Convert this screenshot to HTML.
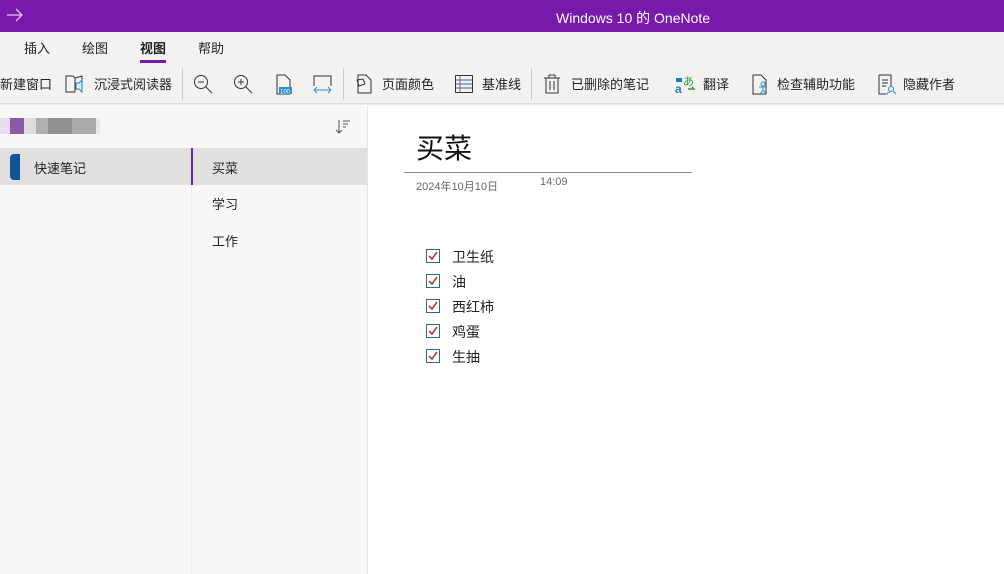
<!DOCTYPE html>
<html><head><meta charset="utf-8"><style>
*{margin:0;padding:0;box-sizing:border-box}
body{width:1004px;height:574px;overflow:hidden;background:#fff;font-family:"Liberation Sans","Noto Sans CJK SC",sans-serif;color:#222;position:relative}
.a{position:absolute;white-space:nowrap}
.t{font-size:13px}
svg{position:absolute}
</style></head><body>
<div class="a" style="left:0;top:0;width:1004px;height:32px;background:#7719aa"></div>
<svg style="left:6px;top:8px" width="18" height="14"><path d="M1 7H16M10 1L16 7L10 13" stroke="#e4c8f0" stroke-width="1.3" fill="none"/></svg>
<div class="a" style="left:556px;top:8px;color:#fff;font-size:14px">Windows 10 的 OneNote</div>
<div class="a" style="left:0;top:32px;width:1004px;height:72px;background:#f3f2f1"></div>
<div class="a t" style="left:24px;top:38px">插入</div>
<div class="a t" style="left:82px;top:38px">绘图</div>
<div class="a t" style="left:140px;top:38px;font-weight:bold">视图</div>
<div class="a" style="left:140px;top:60px;width:26px;height:3px;background:#7719aa"></div>
<div class="a t" style="left:198px;top:38px">帮助</div>
<div class="a t" style="left:0;top:74px">新建窗口</div>
<svg style="left:65px;top:74px" width="22" height="20"><path d="M1 2H8L10 4V18H1ZM10 4L17 2V8" stroke="#333" fill="none"/><path d="M11 9L14 9L17 6V18L14 15H11Z" stroke="#2a7fc1" fill="#dbeefa"/></svg>
<div class="a t" style="left:94px;top:74px">沉浸式阅读器</div>
<div class="a" style="left:182px;top:68px;width:1px;height:32px;background:#ccc"></div>
<svg style="left:193px;top:74px" width="22" height="20"><circle cx="8" cy="8" r="6.5" stroke="#333" fill="none"/><path d="M5 8H11M13 13L19 19" stroke="#333"/></svg>
<svg style="left:233px;top:74px" width="22" height="20"><circle cx="8" cy="8" r="6.5" stroke="#333" fill="none"/><path d="M5 8H11M8 5V11M13 13L19 19" stroke="#333"/></svg>
<svg style="left:275px;top:74px" width="20" height="22"><path d="M2 1H10L15 6V20H2Z" stroke="#333" fill="none"/><rect x="4" y="13" width="13" height="7" fill="#2a8fd4"/><text x="5" y="19.5" font-size="6" fill="#fff" font-family="Liberation Sans">100</text></svg>
<svg style="left:312px;top:74px" width="22" height="20"><path d="M2 12V2H19V12" stroke="#333" fill="none"/><path d="M2 16H19M2 16L5 13M2 16L5 19M19 16L16 13M19 16L16 19" stroke="#2a8fd4" fill="none"/></svg>
<div class="a" style="left:343px;top:68px;width:1px;height:32px;background:#ccc"></div>
<svg style="left:354px;top:74px" width="20" height="20"><path d="M4 1H12L17 6V19H4Z M3 6L9 5L11 10L5 12Z" stroke="#333" fill="none"/></svg>
<div class="a t" style="left:382px;top:74px">页面颜色</div>
<svg style="left:454px;top:74px" width="20" height="20"><rect x="1.5" y="1.5" width="17" height="17" stroke="#333" fill="none"/><path d="M2 6H18M2 10H18M2 14H18" stroke="#2a6fb0"/><path d="M6 2V18" stroke="#c0436b"/></svg>
<div class="a t" style="left:482px;top:74px">基准线</div>
<div class="a" style="left:531px;top:68px;width:1px;height:32px;background:#ccc"></div>
<svg style="left:543px;top:74px" width="18" height="20"><path d="M1 4H17M6 4V1H12V4M3 4V19H15V4M7 7V16M11 7V16" stroke="#333" fill="none"/></svg>
<div class="a t" style="left:571px;top:74px">已删除的笔记</div>
<svg style="left:675px;top:74px" width="22" height="20"><text x="0" y="19" font-size="12" fill="#1f7bbf" font-weight="bold" font-family="Liberation Sans">a</text><text x="8" y="11" font-size="11" fill="#2a9d3a" font-family="Noto Sans CJK SC">あ</text><rect x="1" y="4" width="6" height="4" fill="#1f7bbf"/><path d="M13 15H19L17 13" stroke="#2a9d3a" fill="none" stroke-width="1.5"/></svg>
<div class="a t" style="left:703px;top:74px">翻译</div>
<svg style="left:751px;top:74px" width="22" height="22"><path d="M2 1H10L15 6V20H2Z" stroke="#333" fill="none"/><circle cx="12" cy="10" r="2" stroke="#2a8fd4" fill="none"/><path d="M8 13H16M12 12V16L9 20M12 16L15 20" stroke="#2a8fd4" fill="none"/></svg>
<div class="a t" style="left:777px;top:74px">检查辅助功能</div>
<svg style="left:877px;top:74px" width="22" height="22"><path d="M2 1H14V12M2 1V20H9" stroke="#333" fill="none"/><path d="M5 6H11M5 9H11M5 12H9" stroke="#333"/><circle cx="14" cy="15" r="2.5" stroke="#2a8fd4" fill="none"/><path d="M16 17L19 20M10 21C10 18 12 18 13 18" stroke="#2a8fd4" fill="none"/></svg>
<div class="a t" style="left:903px;top:74px">隐藏作者</div>
<div class="a" style="left:0;top:103px;width:1004px;height:3px;background:linear-gradient(#d8d8d8,#fff0)"></div>
<div class="a" style="left:0;top:106px;width:367px;height:468px;background:#f8f7f6"></div>
<div class="a" style="left:367px;top:106px;width:1px;height:468px;background:#e6e6e6"></div>
<div class="a" style="left:191px;top:185px;width:1px;height:389px;background:#ebebeb"></div>
<div class="a" style="left:0;top:118px;width:100px;height:16px;background:linear-gradient(90deg,#e6def0 0 10px,#8a5aa8 10px 24px,#ddd 24px 36px,#b0b0b0 36px 48px,#909090 48px 72px,#aaa 72px 96px,#e8e8e8 96px)"></div>
<svg style="left:335px;top:119px" width="16" height="16"><path d="M4 1V14M1 11L4 14L7 11M8 2H15M8 5H13M8 8H11" stroke="#555" fill="none"/></svg>
<div class="a" style="left:0;top:148px;width:191px;height:37px;background:#e1e0df"></div>
<div class="a" style="left:10px;top:154px;width:10px;height:26px;background:#0f5596;border-radius:4px 0 0 4px"></div>
<div class="a t" style="left:34px;top:158px">快速笔记</div>
<div class="a" style="left:191px;top:148px;width:176px;height:37px;background:#e1e0df"></div>
<div class="a" style="left:191px;top:148px;width:2px;height:37px;background:#7719aa"></div>
<div class="a t" style="left:212px;top:158px">买菜</div>
<div class="a t" style="left:212px;top:194px">学习</div>
<div class="a t" style="left:212px;top:231px">工作</div>
<div class="a" style="left:416px;top:127px;font-size:28px;color:#111">买菜</div>
<div class="a" style="left:404px;top:172px;width:288px;height:1px;background:#888"></div>
<div class="a" style="left:416px;top:178px;font-size:11px;color:#666">2024年10月10日</div>
<div class="a" style="left:540px;top:176px;font-size:11px;color:#666">14:09</div>
<div class="a" style="left:426px;top:249px">
<div style="position:relative;height:25px"><svg style="left:0;top:0" width="14" height="14"><rect x=".5" y=".5" width="13" height="13" stroke="#2d6b82" fill="#fff"/><path d="M3 7L6 10L11 3" stroke="#c0392b" stroke-width="1.6" fill="none"/></svg><span class="a" style="left:26px;top:-2px;font-size:14px">卫生纸</span></div>
<div style="position:relative;height:25px"><svg style="left:0;top:0" width="14" height="14"><rect x=".5" y=".5" width="13" height="13" stroke="#2d6b82" fill="#fff"/><path d="M3 7L6 10L11 3" stroke="#c0392b" stroke-width="1.6" fill="none"/></svg><span class="a" style="left:26px;top:-2px;font-size:14px">油</span></div>
<div style="position:relative;height:25px"><svg style="left:0;top:0" width="14" height="14"><rect x=".5" y=".5" width="13" height="13" stroke="#2d6b82" fill="#fff"/><path d="M3 7L6 10L11 3" stroke="#c0392b" stroke-width="1.6" fill="none"/></svg><span class="a" style="left:26px;top:-2px;font-size:14px">西红柿</span></div>
<div style="position:relative;height:25px"><svg style="left:0;top:0" width="14" height="14"><rect x=".5" y=".5" width="13" height="13" stroke="#2d6b82" fill="#fff"/><path d="M3 7L6 10L11 3" stroke="#c0392b" stroke-width="1.6" fill="none"/></svg><span class="a" style="left:26px;top:-2px;font-size:14px">鸡蛋</span></div>
<div style="position:relative;height:25px"><svg style="left:0;top:0" width="14" height="14"><rect x=".5" y=".5" width="13" height="13" stroke="#2d6b82" fill="#fff"/><path d="M3 7L6 10L11 3" stroke="#c0392b" stroke-width="1.6" fill="none"/></svg><span class="a" style="left:26px;top:-2px;font-size:14px">生抽</span></div>
</div>
</body></html>
